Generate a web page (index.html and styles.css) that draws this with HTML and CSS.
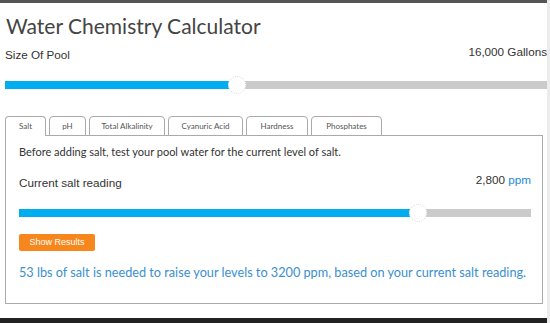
FILE: index.html
```html
<!DOCTYPE html>
<html>
<head>
<meta charset="utf-8">
<link rel="stylesheet" href="styles.css">
</head>
<body>
<div class="frame">
  <div class="topbar"></div>
  <div class="content">
    <h1 class="title">Water Chemistry Calculator</h1>
    <div class="size-row">
      <span class="size-label">Size Of Pool</span>
      <span class="size-value">16,000 Gallons</span>
    </div>
    <div class="slider pool-slider">
      <div class="track"><div class="fill" style="width:232px"></div></div>
      <div class="thumb" style="left:223px"></div>
    </div>
    <div class="tabs">
      <div class="tab active">Salt</div>
      <div class="tab">pH</div>
      <div class="tab">Total Alkalinity</div>
      <div class="tab">Cyanuric Acid</div>
      <div class="tab">Hardness</div>
      <div class="tab">Phosphates</div>
    </div>
    <div class="panel">
      <p class="intro">Before adding salt, test your pool water for the current level of salt.</p>
      <div class="reading-row">
        <span class="reading-label">Current salt reading</span>
        <span class="reading-value">2,800 <span class="unit">ppm</span></span>
      </div>
      <div class="slider salt-slider">
        <div class="track"><div class="fill" style="width:399px"></div></div>
        <div class="thumb" style="left:390px"></div>
      </div>
      <button class="btn">Show Results</button>
      <p class="result">53 lbs of salt is needed to raise your levels to 3200 ppm, based on your current salt reading.</p>
    </div>
  </div>
  <div class="bottombar"></div>
</div>
</body>
</html>
```
FILE: styles.css
```css
html, body {
  margin: 0;
  padding: 0;
  background: #fff;
}
body {
  width: 550px;
  height: 323px;
  overflow: hidden;
  font-family: "Liberation Sans", Arial, sans-serif;
  color: #333;
}
.frame {
  display: flex;
  flex-direction: column;
  height: 323px;
  border-right: 3px solid #ececec;
  box-sizing: border-box;
  width: 550px;
}
.topbar {
  height: 3px;
  background: #555;
  flex: none;
}
.content {
  flex: 1;
  padding: 0 0 0 5px;
}
.title {
  margin: 9px 0 0 1px;
  font-family: Lato, sans-serif;
  font-weight: 400;
  font-size: 21px;
  line-height: 28px;
  color: #444;
}
.size-row {
  display: flex;
  justify-content: space-between;
  align-items: flex-start;
  margin-top: 5px;
  font-size: 11.7px;
  line-height: 14px;
}
.size-label {
  padding-top: 3px;
}
.size-value {
  color: #333;
}
.slider {
  position: relative;
  height: 18px;
}
.pool-slider {
  margin-top: 14px;
}
.track {
  position: relative;
  top: 5px;
  height: 8px;
  background: #cbcbcb;
}
.fill {
  height: 8px;
  background: #00aeef;
}
.thumb {
  position: absolute;
  top: 0;
  width: 16px;
  height: 16px;
  border-radius: 50%;
  background: #fff;
  border: 1px dotted #d8d8d8;
}
.tabs {
  display: flex;
  gap: 3px;
  margin-top: 22px;
  position: relative;
  z-index: 1;
}
.tab {
  height: 20px;
  margin-bottom: -1px;
  box-sizing: border-box;
  border: 1px solid #aaa;
  border-radius: 4px 4px 0 0;
  font-family: Lato, sans-serif;
  font-size: 8px;
  line-height: 18px;
  color: #555;
  text-align: center;
  background: #fff;
}
.tab:nth-child(1) { width: 41px; }
.tab:nth-child(2) { width: 37px; }
.tab:nth-child(3) { width: 76px; }
.tab:nth-child(4) { width: 75px; }
.tab:nth-child(5) { width: 62px; }
.tab:nth-child(6) { width: 71px; }
.tab.active {
  border-bottom: none;
}
.panel {
  border: 1px solid #aaa;
  margin-right: 4px;
  padding: 8px 11px 0 13px;
  height: 169px;
  box-sizing: border-box;
}
.intro {
  margin: 0;
  font-family: Lato, sans-serif;
  font-size: 11px;
  line-height: 16px;
  color: #333;
}
.reading-row {
  display: flex;
  justify-content: space-between;
  align-items: flex-start;
  margin-top: 13px;
  font-size: 11.7px;
  line-height: 14px;
}
.reading-label {
  padding-top: 3px;
}
.unit {
  color: #1e8bd8;
}
.salt-slider {
  margin-top: 14px;
}
.btn {
  display: block;
  margin-top: 12px;
  width: 76px;
  height: 17px;
  padding: 0;
  border: none;
  border-radius: 2px;
  background: #f7861c;
  color: #fff;
  font-family: "Liberation Sans", Arial, sans-serif;
  font-size: 9px;
  line-height: 17px;
  text-align: center;
}
.result {
  margin: 13px 0 0;
  font-family: Lato, sans-serif;
  font-size: 12.7px;
  line-height: 16px;
  color: #3a8fd0;
}
.bottombar {
  height: 5px;
  background: #222;
  flex: none;
  margin-top: 14px;
}
```
